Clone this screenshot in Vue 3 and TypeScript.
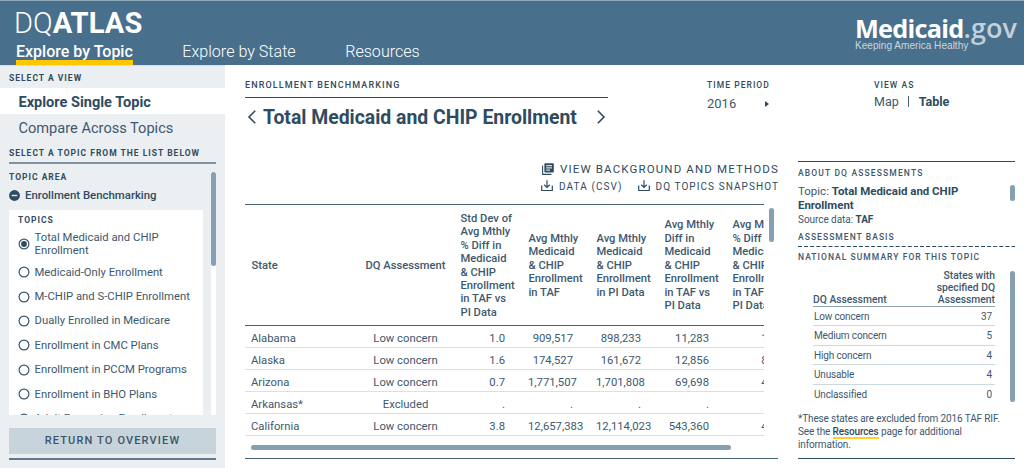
<script setup lang="ts">
import { ref } from 'vue'

interface StateRow {
  state: string
  dq: string
  values: string[]
}

const nav: string[] = ['Explore by Topic', 'Explore by State', 'Resources']

const topics: string[] = [
  'Total Medicaid and CHIP Enrollment',
  'Medicaid-Only Enrollment',
  'M-CHIP and S-CHIP Enrollment',
  'Dually Enrolled in Medicare',
  'Enrollment in CMC Plans',
  'Enrollment in PCCM Programs',
  'Enrollment in BHO Plans',
  'Adult Expansion Enrollment',
]
const selected = ref<number>(0)

const headers: string[][] = [
  ['Std Dev of', 'Avg Mthly', '% Diff in', 'Medicaid', '& CHIP', 'Enrollment', 'in TAF vs', 'PI Data'],
  ['Avg Mthly', 'Medicaid', '& CHIP', 'Enrollment', 'in TAF'],
  ['Avg Mthly', 'Medicaid', '& CHIP', 'Enrollment', 'in PI Data'],
  ['Avg Mthly', 'Diff in', 'Medicaid', '& CHIP', 'Enrollment', 'in TAF vs', 'PI Data'],
  ['Avg Mthly', '% Diff in', 'Medicaid', '& CHIP', 'Enrollment', 'in TAF vs', 'PI Data'],
]

const rows: StateRow[] = [
  { state: 'Alabama', dq: 'Low concern', values: ['1.0', '909,517', '898,233', '11,283', '1.3'] },
  { state: 'Alaska', dq: 'Low concern', values: ['1.6', '174,527', '161,672', '12,856', '8.0'] },
  { state: 'Arizona', dq: 'Low concern', values: ['0.7', '1,771,507', '1,701,808', '69,698', '4.1'] },
  { state: 'Arkansas*', dq: 'Excluded', values: ['.', '.', '.', '.', '.'] },
  { state: 'California', dq: 'Low concern', values: ['3.8', '12,657,383', '12,114,023', '543,360', '4.5'] },
]

const summary: [string, number][] = [
  ['Low concern', 37],
  ['Medium concern', 5],
  ['High concern', 4],
  ['Unusable', 4],
  ['Unclassified', 0],
]
</script>

<template>
  <div class="page">
    <header class="top">
      <div class="brand">
        <div class="logo"><span class="thin">DQ</span><b>ATLAS</b></div>
        <nav class="nav">
          <a v-for="(n, i) in nav" :key="n" :class="['nav-item', { active: i === 0 }]">{{ n }}</a>
        </nav>
      </div>
      <div class="medicaid">
        <div class="med-name"><b>Medicaid</b><span class="gov">.gov</span></div>
        <div class="med-tag">Keeping America Healthy</div>
      </div>
    </header>

    <div class="body">
      <aside class="side">
        <h6 class="cap strong view-cap">SELECT A VIEW</h6>
        <div class="view on">Explore Single Topic</div>
        <div class="view">Compare Across Topics</div>
        <h6 class="cap strong list-cap">SELECT A TOPIC FROM THE LIST BELOW</h6>
        <div class="scroller">
          <div class="list">
            <h6 class="cap strong area-cap">TOPIC AREA</h6>
            <div class="area">
              <svg width="11" height="11" viewBox="0 0 11 11"><circle cx="5.5" cy="5.5" r="5.4" fill="#2f4b60" /><rect x="2.7" y="4.8" width="5.6" height="1.4" fill="#dfe6eb" /></svg>
              <span>Enrollment Benchmarking</span>
            </div>
            <div class="panel">
              <h6 class="cap strong topics-cap">TOPICS</h6>
              <div v-for="(t, i) in topics" :key="t" class="topic" @click="selected = i">
                <svg width="12" height="12" viewBox="0 0 12 12"><circle cx="6" cy="6" r="4.9" fill="none" stroke="#3e586d" stroke-width="1.2" /><circle v-if="i === selected" cx="6" cy="6" r="2.9" fill="#2f4b60" /></svg>
                <span>{{ t }}</span>
              </div>
            </div>
          </div>
          <div class="track"><div class="thumb"></div></div>
        </div>
        <button class="return">RETURN TO OVERVIEW</button>
        <div class="side-rule"></div>
      </aside>

      <main class="main">
        <div class="main-top">
          <div class="heading">
            <h6 class="cap bench">ENROLLMENT BENCHMARKING</h6>
            <div class="title-row">
              <svg width="10" height="16" viewBox="0 0 10 16"><path d="M8.2 1.8 2 8l6.2 6.2" fill="none" stroke="#2f4b60" stroke-width="1.6" /></svg>
              <h1>Total Medicaid and CHIP Enrollment</h1>
              <svg width="10" height="16" viewBox="0 0 10 16"><path d="M1.8 1.8 8 8l-6.2 6.2" fill="none" stroke="#2f4b60" stroke-width="1.6" /></svg>
            </div>
          </div>
          <div class="period">
            <h6 class="cap small-cap">TIME PERIOD</h6>
            <div class="year"><span>2016</span><svg width="4" height="6" viewBox="0 0 4 6"><path d="M0 0l4 3-4 3z" fill="#2f4b60" /></svg></div>
          </div>
        </div>

        <div class="methods">
          <svg width="12" height="12" viewBox="0 0 12 12"><path d="M.6 2.6v8.8h8.8" fill="none" stroke="#2f4b60" stroke-width="1.1" /><rect x="2.4" y=".2" width="9.4" height="9.4" rx="1" fill="#2f4b60" /><path d="M4.2 2.7h5.8M4.2 4.9h5.8M4.2 7.1h3.8" stroke="#fff" stroke-width="1" /></svg>
          <span>VIEW BACKGROUND AND METHODS</span>
        </div>
        <div class="downloads">
          <svg width="12" height="12" viewBox="0 0 12 12"><path d="M.7 5.5v5h10.6v-5M6 .3v7M3.2 4.8 6 7.5l2.8-2.7" fill="none" stroke="#2f4b60" stroke-width="1.2" /></svg>
          <span class="csv">DATA (CSV)</span>
          <svg width="12" height="12" viewBox="0 0 12 12"><path d="M.7 5.5v5h10.6v-5M6 .3v7M3.2 4.8 6 7.5l2.8-2.7" fill="none" stroke="#2f4b60" stroke-width="1.2" /></svg>
          <span class="snap">DQ TOPICS SNAPSHOT</span>
        </div>

        <div class="table-area">
          <div class="table-clip">
            <table class="data">
              <colgroup><col class="c-state" /><col class="c-dq" /><col v-for="n in 5" :key="n" class="c-num" /></colgroup>
              <thead>
                <tr>
                  <th>State</th>
                  <th class="mid">DQ Assessment</th>
                  <th v-for="(h, i) in headers" :key="i"><div v-for="l in h" :key="l">{{ l }}</div></th>
                </tr>
              </thead>
              <tbody>
                <tr v-for="r in rows" :key="r.state">
                  <td>{{ r.state }}</td>
                  <td class="mid">{{ r.dq }}</td>
                  <td v-for="(v, i) in r.values" :key="i" class="num">{{ v }}</td>
                </tr>
              </tbody>
            </table>
          </div>
          <div class="v-thumb"></div>
        </div>
        <div class="h-thumb"></div>
        <div class="main-rule"></div>
      </main>

      <aside class="info">
        <div class="view-as">
          <h6 class="cap small-cap">VIEW AS</h6>
          <div class="modes"><span>Map</span><i></i><b>Table</b></div>
        </div>
        <div class="about">
          <h6 class="cap light about-cap">ABOUT DQ ASSESSMENTS</h6>
          <div class="about-row">
            <div>
              <p class="topic-line">Topic: <b>Total Medicaid and CHIP<br />Enrollment</b></p>
              <p class="source">Source data: <b>TAF</b></p>
            </div>
            <div class="a-thumb"></div>
          </div>
          <h6 class="cap light basis-cap">ASSESSMENT BASIS</h6>
          <svg class="dashes" width="217" height="2" viewBox="0 0 217 2"><path d="M0 .5h217" stroke="#2f4b60" stroke-width="1" stroke-dasharray="4 2.1" /></svg>
          <h6 class="cap light nat-cap">NATIONAL SUMMARY FOR THIS TOPIC</h6>
          <div class="sum-row">
            <div class="sum">
              <div class="sum-head"><span>DQ Assessment</span><span class="right">States with<br />specified DQ<br />Assessment</span></div>
              <div v-for="s in summary" :key="s[0]" class="sum-item"><span>{{ s[0] }}</span><span>{{ s[1] }}</span></div>
            </div>
            <div class="s-thumb"></div>
          </div>
          <p class="note">*These states are excluded from 2016 TAF RIF.<br />See the <b>Resources</b> page for additional<br />information.</p>
          <div class="info-rule"></div>
        </div>
      </aside>
    </div>
  </div>
</template>

<style>
body { background: #fff; overflow: hidden; }
</style>

<style scoped>
* { box-sizing: border-box; margin: 0; padding: 0; }
.page { width: 1024px; height: 468px; overflow: hidden; font-family: Roboto, "Open Sans", sans-serif; color: #3e586d; background: #fff; }
svg { display: block; flex: none; }
b { font-weight: 500; color: #2f4b60; }

.top { height: 65px; background: #486f8c; border-top: 1px solid #8fa9b9; display: flex; justify-content: space-between; color: #fff; }
.brand { padding: 6px 0 0 16px; }
.logo { font-size: 29px; line-height: 33px; height: 33px; margin-left: -2px; white-space: nowrap; }
.logo .thin { font-weight: 300; }
.logo b { font-weight: 700; color: #fff; letter-spacing: 0.15px; }
.nav { display: flex; gap: 49.5px; }
.nav-item { font-size: 16.1px; line-height: 23px; height: 25px; font-weight: 300; white-space: nowrap; }
.nav-item.active { font-size: 16px; font-weight: 500; border-bottom: 5px solid #ffc700; }
.medicaid { width: 169px; padding-top: 10px; white-space: nowrap; }
.med-name { font-family: "Open Sans", sans-serif; font-size: 25.3px; line-height: 34px; height: 29px; display: flex; align-items: baseline; letter-spacing: -0.75px; }
.med-name b { font-weight: 700; color: #fff; }
.gov { color: #c3d0db; font-size: 27px; letter-spacing: 0; font-weight: 600; }
.med-tag { font-family: "Liberation Sans", Arial, sans-serif; font-size: 10.1px; line-height: 12px; color: #c9d6df; }

.body { display: flex; height: 403px; }
.cap { font-size: 8.5px; font-weight: 500; letter-spacing: 1.05px; line-height: 12px; color: #2f4b60; white-space: nowrap; }
.cap.strong { font-weight: 700; letter-spacing: 1px; }
.cap.light { color: #3e586d; }

.side { width: 225px; background: #ebeff2; border-top: 1px solid #d3dde4; }
.view-cap { padding: 6px 0 0 9px; height: 22px; }
.view { height: 26px; line-height: 28px; padding-left: 18.5px; font-size: 14.6px; white-space: nowrap; }
.view.on { background: #fff; line-height: 29px; font-size: 14.55px; font-weight: 700; color: #2f4b60; }
.list-cap { margin: 0 9px 0 9px; padding-top: 7px; height: 24px; border-bottom: 2px solid #7f93a4; width: 207px; }
.scroller { margin: 8px 9px 0 9px; width: 207px; height: 243px; display: flex; justify-content: space-between; }
.list { width: 194px; overflow: hidden; }
.area-cap { line-height: 10px; height: 14px; }
.area { display: flex; gap: 5px; align-items: center; height: 18px; font-size: 11.4px; font-weight: 500; color: #2f4b60; white-space: nowrap; }
.panel { margin-top: 6px; background: #fff; padding: 4px 0 0 9px; }
.topics-cap { height: 14px; }
.topic { height: 24.4px; display: flex; align-items: center; gap: 4.5px; font-size: 11.3px; line-height: 13.3px; }
.topic:nth-child(2) { height: 32px; }
.topic:nth-child(2) span { width: 140px; }
.track { width: 5px; background: #fff; }
.thumb { height: 94px; border-radius: 2.5px; background: #859fb3; }
.return { display: block; margin: 13px 0 0 9px; width: 207px; height: 26px; border: 0; background: #c8d4dc; color: #3a556a; font: 500 11px/26px Roboto, sans-serif; letter-spacing: 1.15px; }
.side-rule { margin: 4px 9px 0; width: 207px; height: 2px; background: #62798c; }

.main { width: 533px; margin-left: 20px; }
.main-top { display: flex; height: 97px; }
.heading { width: 363px; }
.bench { font-size: 9px; letter-spacing: 1.13px; padding-top: 14px; height: 33px; border-bottom: 1px solid #2f4b60; }
.title-row { display: flex; align-items: center; height: 38px; padding-left: 2px; }
.title-row h1 { font-size: 19.4px; line-height: 21px; font-weight: 700; color: #2f4b60; width: 333px; margin-left: 6px; white-space: nowrap; }
.period { margin-left: 99px; }
.small-cap { padding-top: 14px; height: 29px; }
.year { display: flex; align-items: center; gap: 29px; font-size: 13px; line-height: 20px; }
.methods, .downloads { display: flex; align-items: center; justify-content: flex-end; font-weight: 400; color: #2f4b60; white-space: nowrap; margin-right: -1px; }
.methods { font-size: 11.5px; height: 14px; letter-spacing: 1.14px; gap: 6px; }
.downloads { font-size: 10px; height: 20px; letter-spacing: 1.07px; gap: 6px; }
.csv { margin-right: 9px; }
.table-area { display: flex; margin-top: 8px; height: 233px; }
.table-clip { width: 519px; overflow: hidden; }
.data { width: 549px; table-layout: fixed; border-collapse: separate; border-spacing: 0; font-size: 11.3px; }
.c-state { width: 112px; }
.c-dq { width: 97px; }
.c-num { width: 68px; }
.data th { height: 122px; border-top: 1px solid #4a6478; border-bottom: 1px solid #4a6478; text-align: left; font-weight: 500; font-size: 11.2px; line-height: 13.45px; padding: 1px 0 0 6.5px; white-space: nowrap; color: #3e586d; }
.data td { height: 22.1px; line-height: 17px; border-bottom: 1px solid #d7e1e8; padding: 4px 17px 0 6px; white-space: nowrap; }
.data .mid { text-align: center; padding-left: 0; padding-right: 0; }
.data .num { text-align: right; }
.v-thumb { margin: 4px 0 0 5px; width: 5px; height: 34px; border-radius: 2.5px; background: #859fb3; }
.h-thumb { margin: 8px 0 0 6px; width: 480px; height: 5px; border-radius: 2.5px; background: #859fb3; }
.main-rule { margin-top: 8px; height: 1px; background: #4a6478; }

.info { width: 217px; margin-left: 20px; }
.view-as { padding-left: 76px; height: 96px; }
.modes { display: flex; align-items: center; margin-top: -1px; font-size: 12.5px; line-height: 17px; }
.modes i { width: 1px; height: 11px; background: #4a6478; margin: 0 9.5px; }
.modes b { font-weight: 700; }
.about { border-top: 1px solid #2f4b60; }
.about-cap { letter-spacing: 1.15px; padding-top: 5px; height: 23px; }
.about-row { display: flex; justify-content: space-between; height: 45px; white-space: nowrap; }
.topic-line { font-size: 11.5px; line-height: 13.5px; }
.topic-line b { font-size: 11.45px; font-weight: 700; }
.source { font-size: 10px; letter-spacing: -0.05px; line-height: 15px; }
.source b { font-weight: 700; }
.a-thumb { width: 5px; height: 16px; border-radius: 2.5px; background: #859fb3; }
.basis-cap { padding-top: 1px; height: 16px; }
.nat-cap { padding-top: 3px; height: 23px; }
.sum-row { display: flex; justify-content: space-between; height: 134px; }
.sum { width: 182px; margin-left: 15px; font-size: 10px; letter-spacing: -0.15px; }
.sum-head { display: flex; justify-content: space-between; align-items: flex-end; height: 36px; line-height: 12px; font-size: 10.3px; letter-spacing: 0; font-weight: 500; border-bottom: 1px solid #8fa5b4; }
.right { text-align: right; }
.sum-item { display: flex; justify-content: space-between; height: 19.4px; line-height: 19px; padding: 0 3px 0 1px; border-bottom: 1px solid #ccd9e0; }
.sum-item:last-child { border: 0; }
.s-thumb { width: 5px; height: 131px; border-radius: 2.5px; background: #859fb3; }
.note { margin-top: 7px; font-size: 10px; letter-spacing: -0.13px; line-height: 13px; white-space: nowrap; }
.note b { display: inline-block; height: 14px; margin-bottom: -1px; vertical-align: top; border-bottom: 2px solid #ffd02e; }
.info-rule { margin-top: 7px; height: 1px; background: #2f4b60; }
</style>
